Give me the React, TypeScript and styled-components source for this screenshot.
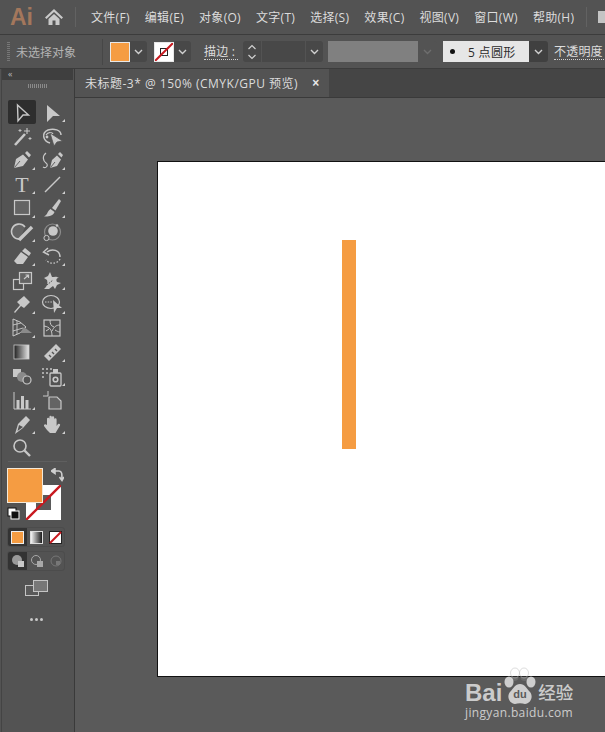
import styled, { createGlobalStyle } from "styled-components";
import type { ReactNode } from "react";

const GlobalStyle = createGlobalStyle`
  html, body {
    margin: 0;
    padding: 0;
    background: #535353;
  }
  * {
    box-sizing: border-box;
  }
`;

const FONT = `"Open Sans", "Noto Sans CJK SC", sans-serif`;

const Shell = styled.div`
  width: 605px;
  height: 732px;
  overflow: hidden;
  position: relative;
  display: flex;
  flex-direction: column;
  background: #535353;
  font-family: ${FONT};
  color: #d6d6d6;
`;

const MenuBar = styled.div`
  height: 35px;
  flex: none;
  display: flex;
  align-items: center;
  padding-left: 10px;
  border-bottom: 1px solid #3c3c3c;
`;

const Logo = styled.div`
  width: 34px;
  flex: none;
  font: bold 23px "Liberation Sans", sans-serif;
  color: #a3775c;
`;

const HomeButton = styled.div`
  width: 31px;
  height: 20px;
  flex: none;
  display: flex;
`;

const MenuDivider = styled.div<{ $ml?: number; $mr?: number }>`
  width: 1px;
  height: 20px;
  flex: none;
  background: #626262;
  margin: 0 ${(p) => p.$mr ?? 15}px 0 ${(p) => p.$ml ?? 0}px;
`;

const MenuList = styled.div`
  display: flex;
  flex: none;
  gap: 15px;
`;

const MenuItem = styled.span`
  font-size: 12px;
  letter-spacing: 0.3px;
  white-space: nowrap;
  color: #dcdcdc;
`;

const WindowSquare = styled.div`
  width: 7px;
  height: 12px;
  flex: none;
  background: #c4c4c4;
  margin-left: 11px;
`;

const ControlBar = styled.div`
  height: 34px;
  flex: none;
  display: flex;
  align-items: center;
  padding-left: 7px;
  border-bottom: 1px solid #3c3c3c;
`;

const Grip = styled.div`
  width: 3px;
  height: 20px;
  flex: none;
  margin-right: 6px;
  background: repeating-linear-gradient(#777 0 1px, transparent 1px 2px);
`;

const Muted = styled.span`
  width: 86px;
  flex: none;
  font-size: 12px;
  color: #b4b4b4;
  white-space: nowrap;
`;

const BarDivider = styled.div`
  width: 1px;
  height: 26px;
  flex: none;
  background: #474747;
  margin-right: 7px;
`;

const Swatch = styled.div<{ $bg: string; $ml?: number }>`
  width: 20px;
  height: 20px;
  flex: none;
  margin-left: ${(p) => p.$ml ?? 0}px;
  background: ${(p) => p.$bg};
  border: 1px solid #e8e8e8;
  display: flex;
`;

const Chevron = styled.div<{ $w?: number; $dim?: boolean; $dark?: boolean }>`
  width: ${(p) => p.$w ?? 17}px;
  height: 21px;
  flex: none;
  display: flex;
  align-items: center;
  justify-content: center;
  background: ${(p) => (p.$dim ? "#535353" : p.$dark ? "#404040" : "#484848")};
  border-radius: 0 3px 3px 0;
`;

const StrokeLabel = styled.span<{ $w: number; $ml: number }>`
  width: ${(p) => p.$w}px;
  margin-left: ${(p) => p.$ml}px;
  font-size: 12px;
  line-height: 15px;
  letter-spacing: 0.2px;
  color: #dcdcdc;
  border-bottom: 1px dotted #cfcfcf;
  white-space: nowrap;
  flex: none;
`;

const Stepper = styled.div`
  width: 18px;
  height: 21px;
  margin-left: 5px;
  flex: none;
  background: #484848;
  border-radius: 3px 0 0 3px;
  display: flex;
  align-items: center;
  justify-content: center;
`;

const NumberField = styled.div`
  width: 43px;
  height: 21px;
  flex: none;
  margin-left: 1px;
  margin-right: 1px;
  background: #484848;
`;

const GrayField = styled.div`
  width: 90px;
  height: 21px;
  margin-left: 5px;
  flex: none;
  background: #808080;
`;

const BrushField = styled.div`
  width: 86px;
  height: 21px;
  margin-left: 6px;
  flex: none;
  background: #e6e6e6;
  color: #2c2c2c;
  font-size: 12px;
  letter-spacing: 0.3px;
  display: flex;
  align-items: center;
  padding-left: 7px;
  white-space: nowrap;
`;

const BrushDot = styled.i`
  width: 5px;
  height: 5px;
  flex: none;
  border-radius: 50%;
  background: #111;
  margin-right: 13px;
`;

const Body = styled.div`
  flex: 1;
  min-height: 0;
  display: flex;
`;

const Toolbox = styled.div`
  width: 74px;
  flex: none;
  margin-left: 1px;
  padding-right: 1px;
  border-right: 1px solid #3a3a3a;
  border-left: 1px solid #444;
  display: flex;
  flex-direction: column;
  align-items: stretch;
`;

const ToolboxHead = styled.div`
  height: 11px;
  background: #3f3f3f;
  color: #bbb;
  font-size: 9px;
  line-height: 10px;
  padding-left: 6px;
  letter-spacing: -1px;
`;

const ToolGrip = styled.div`
  height: 4px;
  width: 20px;
  margin: 4px 0 0 26px;
  background: repeating-linear-gradient(90deg, #8a8a8a 0 1px, transparent 1px 2px);
`;

const ToolGrid = styled.div`
  margin: 12px 0 0 6px;
  display: grid;
  grid-template-columns: 28px 28px;
  column-gap: 2px;
  grid-auto-rows: 24px;
`;

const ToolCell = styled.div<{ $active?: boolean; $more?: boolean }>`
  position: relative;
  border-radius: 2px;
  display: flex;
  align-items: center;
  justify-content: center;
  background: ${(p) => (p.$active ? "#2e2e2e" : "transparent")};
  &::after {
    content: "";
    display: ${(p) => (p.$more ? "block" : "none")};
    position: absolute;
    right: 1px;
    bottom: 2px;
    border-left: 3px solid transparent;
    border-bottom: 3px solid #d0d0d0;
  }
`;

const ToolDivider = styled.div`
  height: 1px;
  margin: 1px 6px 0;
  background: #5f5f5f;
`;

const SwatchStack = styled.div`
  position: relative;
  height: 55px;
  width: 60px;
  margin: 6px 0 0 5px;
`;

const StrokeBox = styled.svg`
  position: absolute;
  left: 19px;
  top: 17px;
`;

const FillBox = styled.div`
  position: absolute;
  left: 0;
  top: 0;
  width: 36px;
  height: 35px;
  background: #f59c42;
  border: 1px solid #f4e9d8;
`;

const SwapIcon = styled.svg`
  position: absolute;
  left: 44px;
  top: 0;
`;

const DefaultIcon = styled.svg`
  position: absolute;
  left: 0;
  top: 39px;
`;

const ButtonRow = styled.div<{ $mt: number }>`
  display: grid;
  grid-template-columns: repeat(3, 19px);
  height: 20px;
  margin: ${(p) => p.$mt}px 0 0 5px;
  width: 58px;
  border: 1px solid #4c4c4c;
  border-radius: 3px;
  overflow: hidden;
`;

const RowButton = styled.div<{ $on?: boolean }>`
  display: flex;
  align-items: center;
  justify-content: center;
  background: ${(p) => (p.$on ? "#333" : "transparent")};
`;

const ScreenMode = styled.div`
  display: flex;
  justify-content: center;
  margin: 9px 2px 0 0;
`;

const MoreDots = styled.div`
  display: flex;
  justify-content: center;
  gap: 2px;
  margin: 22px 2px 0 0;
`;

const Dot = styled.i`
  width: 3px;
  height: 3px;
  border-radius: 50%;
  background: #c9c9c9;
`;

const Workspace = styled.div`
  flex: 1;
  min-width: 0;
  display: flex;
  flex-direction: column;
`;

const TabStrip = styled.div`
  height: 29px;
  flex: none;
  display: flex;
  background: #454545;
  border-bottom: 1px solid #3a3a3a;
`;

const Tab = styled.div`
  width: 254px;
  flex: none;
  background: #535353;
  display: flex;
  align-items: center;
  padding: 0 0 0 10px;
  font-size: 12px;
  letter-spacing: 0.5px;
  white-space: nowrap;
  color: #dcdcdc;
`;

const TabClose = styled.span`
  margin-left: 14px;
  font: bold 12px "Liberation Sans", sans-serif;
  color: #e8e8e8;
`;

const Canvas = styled.div`
  flex: 1;
  min-height: 0;
  background: #5a5a5a;
  padding: 63px 0 0 82px;
`;

const Artboard = styled.div`
  width: 460px;
  height: 516px;
  background: #fff;
  border: 1px solid #111;
  padding: 78px 0 0 184px;
`;

const OrangeBar = styled.div`
  width: 14px;
  height: 209px;
  background: #f59c42;
`;

const Watermark = styled.div`
  position: absolute;
  left: 465px;
  top: 666px;
  width: 115px;
  color: rgba(255, 255, 255, 0.7);
`;

const MarkTop = styled.div`
  display: flex;
  align-items: flex-end;
  height: 40px;
`;

const MarkBai = styled.span`
  font: bold 24px/26px "Liberation Sans", sans-serif;
  margin-right: 2px;
`;

const MarkCn = styled.span`
  font: 500 17.5px/28px "Noto Sans CJK SC", sans-serif;
  margin-left: 2px;
`;

const MarkUrl = styled.div`
  font: 12px/14px "Open Sans", sans-serif;
  letter-spacing: 0.35px;
  white-space: nowrap;
`;

const C = "#c8c8c8";

type IconProps = { children: ReactNode };
const Ic = ({ children }: IconProps) => (
  <svg width="24" height="24" viewBox="0 0 24 24" fill="none" stroke={C} strokeWidth="1.2">
    {children}
  </svg>
);

const tools: { more?: boolean; active?: boolean; icon: ReactNode }[] = [
  { active: true, icon: <path d="M7.5 5 L18.5 15 H13 L8 21 Z" strokeWidth="1.4" /> },
  { more: true, icon: <path d="M7 5 L20 16 H13 L7 22 Z" fill={C} stroke="none" /> },
  {
    icon: (
      <>
        <path d="M5 21 L15 10" strokeWidth="2.6" />
        <path d="M17 4v6M14 7h6" strokeWidth="1.1" />
        <path d="M10 5v3M8.5 6.5h3M20 13v3M18.5 14.5h3" strokeWidth="0.9" />
      </>
    ),
  },
  {
    icon: (
      <>
        <path d="M10 19 C3 17 1 9 8 6 C14 4 21 6 21 11" strokeWidth="1.5" />
        <path d="M6 11 C8 8 12 8 13 10" strokeWidth="1.3" />
        <path d="M10 9 L22.5 17 L17 18 L14 22 Z" fill={C} stroke="#535353" strokeWidth="0.8" />
        <circle cx="7" cy="13" r="1.4" fill={C} stroke="none" />
      </>
    ),
  },
  {
    more: true,
    icon: (
      <>
        <path
          d="M4 20 L6 11 L13 6.5 L18 11.5 L13 18 Z M15 5 L17 3 L21 7 L19 9.5 Z"
          fill={C}
          stroke="none"
        />
        <path d="M4.5 19.5 L10 13" stroke="#535353" strokeWidth="0.9" />
      </>
    ),
  },
  {
    more: true,
    icon: (
      <>
        <path
          d="M10 20 L12 12 L17 7.5 L21 11.5 L17 18 Z M18 6 L20 4 L23 7 L21.5 9.5 Z"
          fill={C}
          stroke="none"
        />
        <path d="M10.5 19.5 L15 14" stroke="#535353" strokeWidth="0.9" />
        <path d="M6 5 C2 8 3 13 6 15 C9 17 6 21 3 19" strokeWidth="1.2" />
      </>
    ),
  },
  {
    more: true,
    icon: (
      <text
        x="12"
        y="20"
        textAnchor="middle"
        fontFamily="Liberation Serif"
        fontSize="22"
        fill={C}
        stroke="none"
      >
        T
      </text>
    ),
  },
  { more: true, icon: <path d="M5 20 L20 5" strokeWidth="1.4" /> },
  { more: true, icon: <rect x="4.5" y="4.5" width="15" height="14" fill="#646464" strokeWidth="1.2" /> },
  {
    more: true,
    icon: (
      <>
        <path d="M12 12 L19 3 L21 5 L15.5 14.5 Z" fill={C} stroke="none" />
        <path d="M10.5 13 L14.5 16 C13 20 8 21 4 20.5 C7.5 19 7 15.5 10.5 13 Z" fill={C} stroke="none" />
      </>
    ),
  },
  {
    more: true,
    icon: (
      <>
        <path d="M10 19 A7.5 7.5 0 1 1 15 7" fill="#646464" strokeWidth="1.6" />
        <path d="M9 20 L22 7" strokeWidth="3.4" />
      </>
    ),
  },
  {
    icon: (
      <>
        <circle cx="13" cy="11" r="4.8" fill={C} stroke="none" />
        <circle cx="12.5" cy="12" r="8" stroke="#8c8c8c" strokeWidth="1.2" />
        <circle cx="6.5" cy="18" r="2.6" fill="#535353" strokeWidth="1" />
        <circle cx="17" cy="5.5" r="1.3" fill={C} stroke="none" />
      </>
    ),
  },
  {
    more: true,
    icon: (
      <path d="M4 17 L11 8 L18 13 L13 20 H7 Z M12 7 L15 4 L21 9 L19 12 Z" fill={C} stroke="none" />
    ),
  },
  {
    more: true,
    icon: (
      <>
        <path d="M7 8 C12 4 20 6 20 13" strokeWidth="1.5" />
        <path d="M20 15 A8 7 0 0 1 6 16" strokeWidth="1.3" strokeDasharray="1.6 1.6" />
        <path d="M8 4 L3.5 8 L9 11" strokeWidth="1.5" />
      </>
    ),
  },
  {
    icon: (
      <>
        <rect x="3.5" y="11.5" width="10" height="10" />
        <rect x="9.5" y="4.5" width="12" height="11" fill="#646464" />
        <path d="M14 11 L18.5 7 M15.5 7 h3 v3" />
      </>
    ),
  },
  {
    more: true,
    icon: (
      <>
        <path
          d="M4 21 C7 18 8 16 7 12 L4 10 L8 8 L10 4 L12 9 C15 9 16 8 19 10 C16 10 16 12 17 14 L21 15 L17 17 L15 21 L13 18 L9 21 Z"
          fill={C}
          stroke="none"
        />
        <path d="M7 17 L13 12" stroke="#535353" strokeWidth="1" strokeDasharray="1.5 1" />
      </>
    ),
  },
  {
    more: true,
    icon: (
      <path
        d="M4 20 L10 13 L7 10 L14 4 L20 10 L14 16 L11 14 L5 21 Z"
        fill={C}
        stroke="none"
      />
    ),
  },
  {
    more: true,
    icon: (
      <>
        <ellipse cx="11" cy="10" rx="8.5" ry="6.5" strokeWidth="1.2" />
        <path d="M5 10 h8" strokeDasharray="1.5 1.2" />
        <path d="M13 8 L22 16 H17 L14 21 Z" fill={C} stroke="none" />
      </>
    ),
  },
  {
    more: true,
    icon: (
      <>
        <path d="M3 3 V20 L10 17 L16 11 L10 6 Z" strokeWidth="1" />
        <path d="M3 9 L11 7 M3 15 L13 12 M7 5 V18" strokeWidth="0.9" />
        <path d="M10 17 L22 17 L14 11 Z" fill="#8a8a8a" stroke="none" />
      </>
    ),
  },
  {
    icon: (
      <>
        <rect x="4" y="4" width="16" height="16" strokeWidth="1.2" />
        <path
          d="M12 20 C12 14 10 11 4 10 M12 15 C14 11 16 9 20 9 M10 4 C10 8 11 10 14 11 M15 14 C17 15 18 16 20 16 M6 15 L9 13"
          strokeWidth="1"
        />
      </>
    ),
  },
  {
    icon: (
      <>
        <defs>
          <linearGradient id="gradTool" x1="0" x2="1" y1="0" y2="0">
            <stop offset="0" stopColor="#1f1f1f" />
            <stop offset="1" stopColor="#e8e8e8" />
          </linearGradient>
        </defs>
        <rect x="4" y="5" width="15" height="14" fill="url(#gradTool)" stroke="#c8c8c8" strokeWidth="0.8" />
      </>
    ),
  },
  {
    more: true,
    icon: (
      <>
        <path d="M4 16 L16 4 L21 9 L9 21 Z" fill={C} stroke="none" />
        <path d="M9 15 l2 2 M12 12 l2 2 M15 9 l2 2" stroke="#535353" strokeWidth="1.4" />
      </>
    ),
  },
  {
    icon: (
      <>
        <rect x="3" y="5" width="8" height="8" fill={C} stroke="none" />
        <circle cx="12" cy="13" r="5" fill="#8a8a8a" stroke="none" />
        <circle cx="17" cy="16" r="4" fill="#535353" strokeWidth="1.2" />
      </>
    ),
  },
  {
    more: true,
    icon: (
      <>
        <path d="M2 5h2M6 5h2M10 5h2M2 9h2M6 9h2M2 13h2" stroke="#a8a8a8" strokeWidth="2" />
        <rect x="10" y="9" width="11" height="13" rx="1" strokeWidth="1.3" />
        <rect x="13" y="5" width="5" height="4" fill={C} stroke="none" />
        <circle cx="15.5" cy="15.5" r="2.3" strokeWidth="1.6" />
      </>
    ),
  },
  {
    more: true,
    icon: (
      <>
        <path d="M4 4 V21 H21" strokeWidth="1" />
        <path d="M8 21 V12 M12.5 21 V8 M17 21 V12" strokeWidth="3" />
      </>
    ),
  },
  {
    icon: (
      <>
        <path d="M8 3 V8 M3 8 H8" strokeWidth="1" />
        <path d="M9 9 H17 L21 13 V21 H9 Z" fill="#646464" strokeWidth="1.2" />
      </>
    ),
  },
  {
    more: true,
    icon: (
      <path d="M5 22 L8 12 L16 4 L20 8 L13 16 Z M7.5 19 L9 13 L13 15 Z" fill={C} stroke="none" fillRule="evenodd" />
    ),
  },
  {
    more: true,
    icon: (
      <path
        d="M7 13 V7 a1.2 1.2 0 0 1 2.4 0 V11 V5 a1.2 1.2 0 0 1 2.4 0 V11 V5.5 a1.2 1.2 0 0 1 2.4 0 V11 V7.5 a1.2 1.2 0 0 1 2.4 0 V14 L18 12 a1.3 1.3 0 0 1 2 1.6 L15.5 21 H10 C8 19 6 17 4 14 a1.3 1.3 0 0 1 2 -1.4 Z"
        fill={C}
        stroke="none"
      />
    ),
  },
  {
    icon: (
      <>
        <circle cx="10" cy="10" r="6" strokeWidth="1.6" />
        <path d="M14.5 14.5 L20 20" strokeWidth="2.4" />
      </>
    ),
  },
];

const Down = ({ color = "#d0d0d0" }: { color?: string }) => (
  <svg width="9" height="6" viewBox="0 0 9 6" fill="none" stroke={color} strokeWidth="1.4">
    <path d="M1 1 L4.5 4.5 L8 1" />
  </svg>
);

const menus = ["文件(F)", "编辑(E)", "对象(O)", "文字(T)", "选择(S)", "效果(C)", "视图(V)", "窗口(W)", "帮助(H)"];

export default function App() {
  return (
    <Shell>
      <GlobalStyle />
      <MenuBar>
        <Logo>Ai</Logo>
        <HomeButton>
          <svg width="20" height="20" viewBox="0 0 20 20" fill="#c9c9c9">
            <path d="M10 2 L19 10.5 L17.5 12 L10 5 L2.5 12 L1 10.5 Z M4.5 12 L10 7 L15.5 12 V18 H11.5 V13.5 H8.5 V18 H4.5 Z" />
          </svg>
        </HomeButton>
        <MenuDivider />
        <MenuList>
          {menus.map((m) => (
            <MenuItem key={m}>{m}</MenuItem>
          ))}
        </MenuList>
        <MenuDivider $ml={12} $mr={0} />
        <WindowSquare />
      </MenuBar>

      <ControlBar>
        <Grip />
        <Muted>未选择对象</Muted>
        <BarDivider />
        <Swatch $bg="#f59c42" />
        <Chevron>
          <Down />
        </Chevron>
        <Swatch $bg="#fff" $ml={7}>
          <svg width="18" height="18" viewBox="0 0 18 18">
            <rect x="5.5" y="5.5" width="7" height="7" fill="none" stroke="#222" />
            <path d="M0 18 L18 0" stroke="#c8191f" strokeWidth="2" />
          </svg>
        </Swatch>
        <Chevron>
          <Down />
        </Chevron>
        <StrokeLabel $w={34} $ml={13}>描边 :</StrokeLabel>
        <Stepper>
          <svg width="10" height="16" viewBox="0 0 10 16" fill="none" stroke="#d0d0d0" strokeWidth="1.2">
            <path d="M1.5 5 L5 1.5 L8.5 5 M1.5 11 L5 14.5 L8.5 11" />
          </svg>
        </Stepper>
        <NumberField />
        <Chevron $w={17}>
          <Down />
        </Chevron>
        <GrayField />
        <Chevron $w={19} $dim>
          <Down color="#6e6e6e" />
        </Chevron>
        <BrushField>
          <BrushDot />5 点圆形
        </BrushField>
        <Chevron $w={19} $dark>
          <Down />
        </Chevron>
        <StrokeLabel $w={60} $ml={6}>不透明度</StrokeLabel>
      </ControlBar>

      <Body>
        <Toolbox>
          <ToolboxHead>‹‹</ToolboxHead>
          <ToolGrip />
          <ToolGrid>
            {tools.map((t, i) => (
              <ToolCell key={i} $active={t.active} $more={t.more}>
                <Ic>{t.icon}</Ic>
              </ToolCell>
            ))}
          </ToolGrid>
          <ToolDivider />
          <SwatchStack>
            <StrokeBox width="35" height="35" viewBox="0 0 35 35">
              <rect width="35" height="35" fill="#fff" />
              <rect x="10" y="10" width="15" height="15" fill="#5a5a5a" />
              <path d="M0 35 L35 0" stroke="#c8191f" strokeWidth="2.4" />
            </StrokeBox>
            <FillBox />
            <SwapIcon width="13" height="14" viewBox="0 0 13 14" fill="none" stroke="#cfcfcf" strokeWidth="1.6">
              <path d="M2 3 H8 C11 3 11 6 11 11 M0.5 3 L4 0.5 V5.5 Z M8.5 9 L11 12.5 L13 9" />
            </SwapIcon>
            <DefaultIcon width="13" height="13" viewBox="0 0 13 13">
              <rect x="1" y="1" width="8" height="8" fill="#fff" stroke="#111" />
              <rect x="4" y="4" width="8" height="8" fill="#111" stroke="#fff" />
            </DefaultIcon>
          </SwatchStack>
          <ButtonRow $mt={4}>
            <RowButton $on>
              <svg width="13" height="13">
                <rect x="0.5" y="0.5" width="12" height="12" fill="#f59c42" stroke="#eee" />
              </svg>
            </RowButton>
            <RowButton>
              <svg width="13" height="13">
                <defs>
                  <linearGradient id="gradBtn" x1="0" x2="1" y1="0" y2="0">
                    <stop offset="0" stopColor="#fff" />
                    <stop offset="1" stopColor="#111" />
                  </linearGradient>
                </defs>
                <rect x="0.5" y="0.5" width="12" height="12" fill="url(#gradBtn)" stroke="#ddd" />
              </svg>
            </RowButton>
            <RowButton>
              <svg width="13" height="13">
                <rect x="0.5" y="0.5" width="12" height="12" fill="#fff" stroke="#222" />
                <path d="M1 12 L12 1" stroke="#c8191f" strokeWidth="2" />
              </svg>
            </RowButton>
          </ButtonRow>
          <ButtonRow $mt={4}>
            <RowButton $on>
              <svg width="14" height="14" fill="#c8c8c8">
                <circle cx="6" cy="6" r="5" fill="#9a9a9a" />
                <rect x="7" y="7" width="6" height="6" />
              </svg>
            </RowButton>
            <RowButton>
              <svg width="14" height="14" fill="none" stroke="#a8a8a8">
                <circle cx="6" cy="6" r="4.5" />
                <rect x="7" y="7" width="6" height="6" fill="#a8a8a8" stroke="none" />
              </svg>
            </RowButton>
            <RowButton>
              <svg width="14" height="14" fill="none" stroke="#777">
                <circle cx="7" cy="7" r="5" />
                <rect x="7" y="7" width="4" height="4" fill="#777" stroke="none" />
              </svg>
            </RowButton>
          </ButtonRow>
          <ScreenMode>
            <svg width="24" height="16" viewBox="0 0 24 16">
              <rect x="0.5" y="5.5" width="13" height="10" fill="#5a5a5a" stroke="#c4c4c4" />
              <rect x="8.5" y="0.5" width="14" height="11" fill="#777" stroke="#c4c4c4" />
            </svg>
          </ScreenMode>
          <MoreDots>
            <Dot />
            <Dot />
            <Dot />
          </MoreDots>
        </Toolbox>

        <Workspace>
          <TabStrip>
            <Tab>
              未标题-3* @ 150% (CMYK/GPU 预览)
              <TabClose>×</TabClose>
            </Tab>
          </TabStrip>
          <Canvas>
            <Artboard>
              <OrangeBar />
            </Artboard>
          </Canvas>
        </Workspace>
      </Body>

      <Watermark>
        <MarkTop>
          <MarkBai>Bai</MarkBai>
          <svg width="32" height="39" viewBox="0 0 32 39" fill="currentColor">
            <ellipse cx="11" cy="6" rx="4.5" ry="5" fill="none" stroke="#bbb" strokeOpacity="0.5" />
            <ellipse cx="20" cy="6" rx="4.5" ry="5" fill="none" stroke="#bbb" strokeOpacity="0.5" />
            <ellipse cx="5" cy="15" rx="4.5" ry="5.5" />
            <ellipse cx="27" cy="15" rx="4.5" ry="5.5" />
            <ellipse cx="10.5" cy="10" rx="4" ry="4" opacity="0.15" />
            <ellipse cx="20.5" cy="10" rx="4" ry="4" opacity="0.15" />
            <path d="M16 17 C11 17 10 21 6 25 C2 30 6 37 11 37 C14 36 18 36 21 37 C26 37 30 30 26 25 C22 21 21 17 16 17 Z" />
            <text x="16" y="31" textAnchor="middle" fontFamily="Liberation Sans" fontWeight="700" fontSize="11" fill="#5a5a5a">
              du
            </text>
          </svg>
          <MarkCn>经验</MarkCn>
        </MarkTop>
        <MarkUrl>jingyan.baidu.com</MarkUrl>
      </Watermark>
    </Shell>
  );
}
